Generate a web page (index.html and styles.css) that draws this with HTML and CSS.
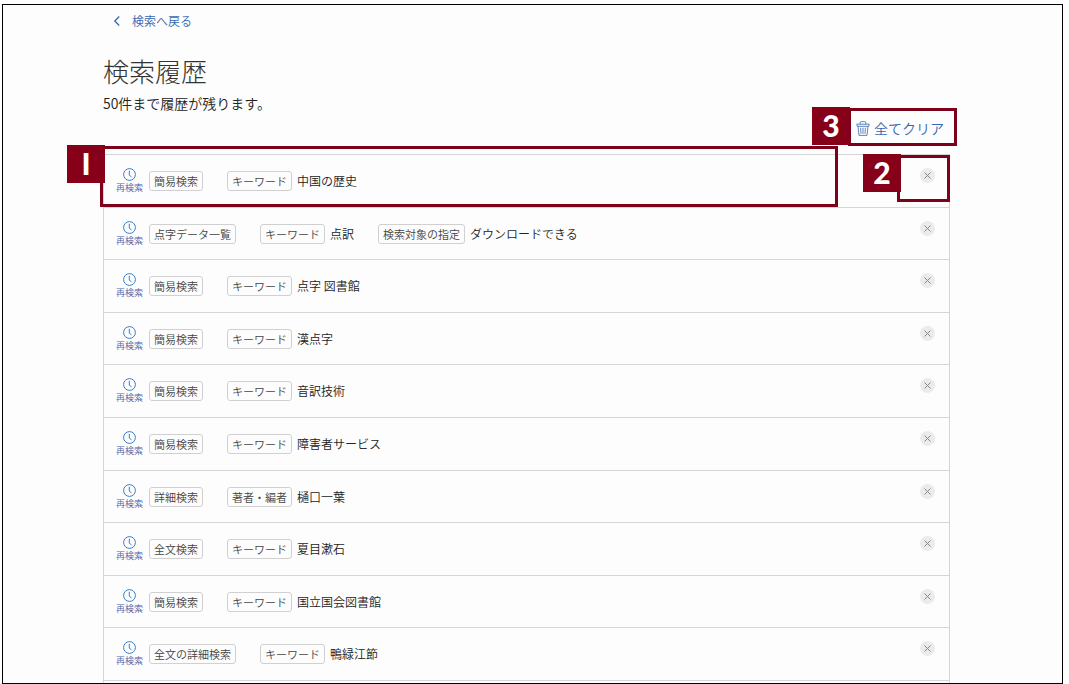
FILE: index.html
```html
<!DOCTYPE html>
<html lang="ja">
<head>
    <meta charset="UTF-8">
    <meta name="viewport" content="width=device-width, initial-scale=1.0">
    <title>検索履歴</title>
    <link rel="stylesheet" href="styles.css">
</head>
<body>

<!-- アイコン定義 -->
<svg class="icon-defs" aria-hidden="true">
    <symbol id="icon-clock" viewBox="0 0 13 13">
        <circle cx="6.5" cy="6.5" r="5.9" />
        <path d="M6.3 2.8v4.4l2.2 1.6" />
    </symbol>
    <symbol id="icon-close" viewBox="0 0 15 15">
        <path d="M4.5 4.5l6 6M10.5 4.5l-6 6" />
    </symbol>
</svg>

<main class="container">
    <a class="back" href="#">
        <svg class="back-icon" viewBox="0 0 8 12"><path d="M6.2 1.5L1.8 6l4.4 4.5" /></svg>
        検索へ戻る
    </a>
    <h1>検索履歴</h1>
    <p class="note">50件まで履歴が残ります。</p>

    <div class="toolbar">
        <div class="clear">
            <button type="button" class="clear-button">
                <svg class="trash-icon" viewBox="0 0 14 15">
                    <path d="M.6 3.2h12.8M4.2 3V1.8Q4.2.6 5.4.6h3.2q1.2 0 1.2 1.2V3M.8 3.4l.5 1.9h11.4l.5-1.9M2 5.4l1 9h8l1-9M4.6 6.8l.4 6M7 6.8v6M9.4 6.8l-.4 6" />
                </svg>
                全てクリア
            </button>
            <div class="callout callout-clear"><span class="callout-number">3</span></div>
        </div>
    </div>

    <!-- 履歴一覧 -->
    <ul class="history">
        <li>
            <button type="button" class="retry"><svg><use href="#icon-clock" /></svg>再検索</button>
            <div class="conditions">
                <span class="tag">簡易検索</span>
                <span class="condition"><span class="tag">キーワード</span>中国の歴史</span>
            </div>
            <button type="button" class="close" aria-label="削除"><svg><use href="#icon-close" /></svg></button>
            <div class="callout callout-row"><span class="callout-number">I</span></div>
            <div class="callout callout-close"><span class="callout-number">2</span></div>
        </li>
        <li>
            <button type="button" class="retry"><svg><use href="#icon-clock" /></svg>再検索</button>
            <div class="conditions">
                <span class="tag">点字データ一覧</span>
                <span class="condition"><span class="tag">キーワード</span>点訳</span>
                <span class="condition"><span class="tag">検索対象の指定</span>ダウンロードできる</span>
            </div>
            <button type="button" class="close" aria-label="削除"><svg><use href="#icon-close" /></svg></button>
        </li>
        <li>
            <button type="button" class="retry"><svg><use href="#icon-clock" /></svg>再検索</button>
            <div class="conditions">
                <span class="tag">簡易検索</span>
                <span class="condition"><span class="tag">キーワード</span>点字 図書館</span>
            </div>
            <button type="button" class="close" aria-label="削除"><svg><use href="#icon-close" /></svg></button>
        </li>
        <li>
            <button type="button" class="retry"><svg><use href="#icon-clock" /></svg>再検索</button>
            <div class="conditions">
                <span class="tag">簡易検索</span>
                <span class="condition"><span class="tag">キーワード</span>漢点字</span>
            </div>
            <button type="button" class="close" aria-label="削除"><svg><use href="#icon-close" /></svg></button>
        </li>
        <li>
            <button type="button" class="retry"><svg><use href="#icon-clock" /></svg>再検索</button>
            <div class="conditions">
                <span class="tag">簡易検索</span>
                <span class="condition"><span class="tag">キーワード</span>音訳技術</span>
            </div>
            <button type="button" class="close" aria-label="削除"><svg><use href="#icon-close" /></svg></button>
        </li>
        <li>
            <button type="button" class="retry"><svg><use href="#icon-clock" /></svg>再検索</button>
            <div class="conditions">
                <span class="tag">簡易検索</span>
                <span class="condition"><span class="tag">キーワード</span>障害者サービス</span>
            </div>
            <button type="button" class="close" aria-label="削除"><svg><use href="#icon-close" /></svg></button>
        </li>
        <li>
            <button type="button" class="retry"><svg><use href="#icon-clock" /></svg>再検索</button>
            <div class="conditions">
                <span class="tag">詳細検索</span>
                <span class="condition"><span class="tag">著者・編者</span>樋口一葉</span>
            </div>
            <button type="button" class="close" aria-label="削除"><svg><use href="#icon-close" /></svg></button>
        </li>
        <li>
            <button type="button" class="retry"><svg><use href="#icon-clock" /></svg>再検索</button>
            <div class="conditions">
                <span class="tag">全文検索</span>
                <span class="condition"><span class="tag">キーワード</span>夏目漱石</span>
            </div>
            <button type="button" class="close" aria-label="削除"><svg><use href="#icon-close" /></svg></button>
        </li>
        <li>
            <button type="button" class="retry"><svg><use href="#icon-clock" /></svg>再検索</button>
            <div class="conditions">
                <span class="tag">簡易検索</span>
                <span class="condition"><span class="tag">キーワード</span>国立国会図書館</span>
            </div>
            <button type="button" class="close" aria-label="削除"><svg><use href="#icon-close" /></svg></button>
        </li>
        <li>
            <button type="button" class="retry"><svg><use href="#icon-clock" /></svg>再検索</button>
            <div class="conditions">
                <span class="tag">全文の詳細検索</span>
                <span class="condition"><span class="tag">キーワード</span>鴨緑江節</span>
            </div>
            <button type="button" class="close" aria-label="削除"><svg><use href="#icon-close" /></svg></button>
        </li>
    </ul>
</main>

</body>
</html>
```
FILE: styles.css
```css
* {
    box-sizing: border-box;
}
body {
    margin: 4px 6px 0 2px;
    font-family: "Noto Sans CJK JP", sans-serif;
    font-size: 12px;
    font-weight: 350;
    line-height: 20px;
    color: #222;
    background-color: #fff;
}
button {
    padding: 0;
    border: none;
    background: none;
    font-family: inherit;
    font-weight: inherit;
    color: #3567b0;
    cursor: pointer;
}
svg {
    fill: none;
    stroke: currentColor;
}
.icon-defs {
    position: absolute;
    width: 0;
    height: 0;
}
.container {
    padding: 6px 112px 0 100px;
    border: 1px solid #000;
    background-color: #fdfdfd;
}
.back {
    display: flex;
    align-items: center;
    gap: 11px;
    width: fit-content;
    margin-left: 10px;
    color: #3567b0;
    text-decoration: none;
}
.back-icon {
    width: 8px;
    height: 12px;
    stroke-width: 1.3;
}
h1 {
    margin: 22px 0 4px;
    font-size: 26px;
    font-weight: 200;
    line-height: 36px;
    color: #333;
}
.note {
    margin: 0;
    font-size: 14px;
}
.toolbar {
    display: flex;
    justify-content: flex-end;
    padding: 5px 6px 16px 0;
}
.clear {
    position: relative;
}
.clear-button {
    display: flex;
    align-items: center;
    gap: 4px;
    font-size: 14px;
    line-height: 20px;
}
.trash-icon {
    width: 14px;
    height: 15px;
    stroke-width: 0.8;
}

/* 履歴一覧 */
.history {
    margin: 0;
    padding: 0 0 2px;
    border: 1px solid #d5d5d5;
    border-bottom: none;
    list-style: none;
}
.history li {
    position: relative;
    display: flex;
    align-items: flex-start;
    gap: 6px;
    min-height: 53px;
    padding: 13px 14px 0 12px;
    border-bottom: 1px solid #d5d5d5;
}
.history li:nth-child(5n+2),
.history li:nth-child(5n+4) {
    min-height: 52px;
}
.retry {
    display: flex;
    flex-direction: column;
    align-items: center;
    gap: 1px;
    font-size: 9px;
    line-height: 12px;
    color: #4a5fa5;
    white-space: nowrap;
}
.retry svg {
    width: 13px;
    height: 13px;
    color: #3b7cc4;
}
.conditions {
    display: flex;
    flex: 1;
    flex-wrap: wrap;
    gap: 4px 24px;
    padding-top: 3px;
}
.condition {
    display: flex;
    align-items: center;
    gap: 5px;
}
.tag {
    padding: 0 4px;
    border: 1px solid #d0d0d0;
    border-radius: 3px;
    font-size: 11px;
    line-height: 18px;
    color: #444;
}
.close {
    width: 15px;
    height: 15px;
    border-radius: 50%;
    background-color: #ebebeb;
    color: #888;
}
.close svg {
    display: block;
    width: 15px;
    height: 15px;
}

/* 説明用の枠と番号 */
.callout {
    position: absolute;
    border: 3px solid #7f0019;
    pointer-events: none;
}
.callout-number {
    position: absolute;
    width: 38px;
    height: 38px;
    background-color: #860019;
    color: #fff;
    font-family: Lato, sans-serif;
    font-size: 30px;
    font-weight: 900;
    line-height: 36px;
    text-align: center;
}
.callout-row {
    top: -9px;
    right: 111px;
    bottom: 0;
    left: -4px;
}
.callout-row .callout-number {
    top: -4px;
    left: -36px;
}
.callout-close {
    top: 0;
    right: -1px;
    width: 53px;
    height: 47px;
}
.callout-close .callout-number {
    top: -4px;
    left: -37px;
}
.callout-clear {
    top: -10px;
    right: -13px;
    bottom: -8px;
    left: -8px;
}
.callout-clear .callout-number {
    top: -4px;
    left: -39px;
}
```
